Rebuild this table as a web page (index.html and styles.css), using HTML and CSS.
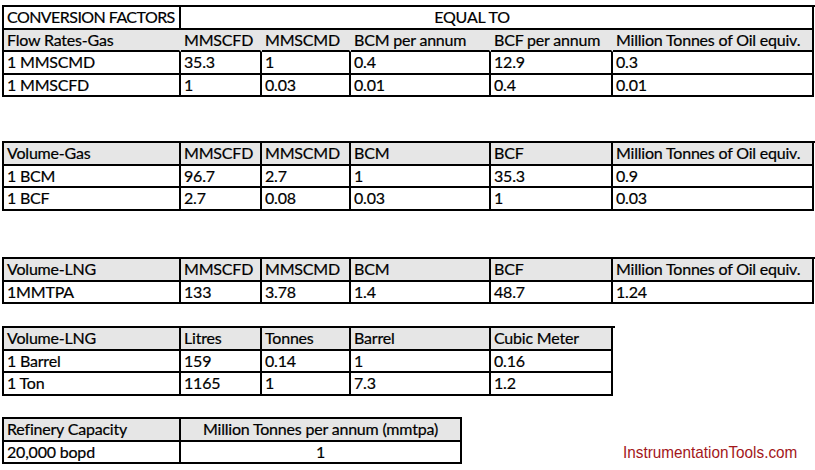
FILE: index.html
```html
<!DOCTYPE html>
<html lang="en">
<head>
<meta charset="utf-8">
<title>Conversion Factors</title>
<link rel="stylesheet" href="styles.css">
</head>
<body>
<div class="sheet">
  <div class="tbl cols6 t1">
    <div class="c caps">CONVERSION FACTORS</div>
    <div class="c span5 equal">EQUAL TO</div>
    <div class="c h open">Flow Rates-Gas</div>
    <div class="c h open">MMSCFD</div>
    <div class="c h open">MMSCMD</div>
    <div class="c h open">BCM per annum</div>
    <div class="c h open">BCF per annum</div>
    <div class="c h">Million Tonnes of Oil equiv.</div>
    <div class="c">1 MMSCMD</div><div class="c">35.3</div><div class="c">1</div><div class="c">0.4</div><div class="c">12.9</div><div class="c">0.3</div>
    <div class="c">1 MMSCFD</div><div class="c">1</div><div class="c">0.03</div><div class="c">0.01</div><div class="c">0.4</div><div class="c">0.01</div>
  </div>

  <div class="tbl cols6 t2">
    <div class="c h">Volume-Gas</div><div class="c h">MMSCFD</div><div class="c h">MMSCMD</div><div class="c h">BCM</div><div class="c h">BCF</div><div class="c h">Million Tonnes of Oil equiv.</div>
    <div class="c">1 BCM</div><div class="c">96.7</div><div class="c">2.7</div><div class="c">1</div><div class="c">35.3</div><div class="c">0.9</div>
    <div class="c">1 BCF</div><div class="c">2.7</div><div class="c">0.08</div><div class="c">0.03</div><div class="c">1</div><div class="c">0.03</div>
  </div>

  <div class="tbl cols6 t3">
    <div class="c h">Volume-LNG</div><div class="c h">MMSCFD</div><div class="c h">MMSCMD</div><div class="c h">BCM</div><div class="c h">BCF</div><div class="c h">Million Tonnes of Oil equiv.</div>
    <div class="c">1MMTPA</div><div class="c">133</div><div class="c">3.78</div><div class="c">1.4</div><div class="c">48.7</div><div class="c">1.24</div>
  </div>

  <div class="tbl cols5 t4">
    <div class="c h">Volume-LNG</div><div class="c h">Litres</div><div class="c h">Tonnes</div><div class="c h">Barrel</div><div class="c h">Cubic Meter</div>
    <div class="c">1 Barrel</div><div class="c">159</div><div class="c">0.14</div><div class="c">1</div><div class="c">0.16</div>
    <div class="c">1 Ton</div><div class="c">1165</div><div class="c">1</div><div class="c">7.3</div><div class="c">1.2</div>
  </div>

  <div class="bottom">
    <div class="tbl cols2 t5">
      <div class="c h">Refinery Capacity</div><div class="c h center">Million Tonnes per annum (mmtpa)</div>
      <div class="c">20,000 bopd</div><div class="c center">1</div>
    </div>
    <div class="mark">InstrumentationTools.com</div>
  </div>
</div>
</body>
</html>
```

FILE: styles.css
```css
html, body {
  margin: 0;
  padding: 0;
  background: #ffffff;
}

.sheet {
  width: 815px;
  height: 470px;
  padding: 5px 0 0 2px;
  box-sizing: border-box;
  font-family: Lato, "Open Sans", sans-serif;
  font-size: 16px;
  letter-spacing: -0.2px;
  color: #000000;
  -webkit-text-stroke: 0.2px #000;
}

.tbl {
  display: grid;
  border-top: 2px solid #000;
  border-left: 2px solid #000;
  grid-auto-rows: 22.5px;
}

.cols6 {
  width: 812px;
  grid-template-columns: 177px 81px 89px 140px 122px 201px;
}

.cols5 {
  width: 611px;
  grid-template-columns: 177px 81px 89px 140px 122px;
}

.cols2 {
  width: 460px;
  grid-template-columns: 177px 281px;
}

.c {
  box-sizing: border-box;
  border-right: 2px solid #000;
  border-bottom: 2px solid #000;
  padding: 0 0 0 3px;
  line-height: 20px;
  white-space: nowrap;
  overflow: hidden;
}

.caps {
  letter-spacing: -0.55px;
}

.h {
  background: #e6e6e6;
}

.open {
  border-right-color: transparent;
}

.span5 {
  grid-column: span 5;
}

.equal {
  text-align: center;
  padding-right: 52px;
}

.center {
  text-align: center;
  padding-left: 0;
}

.t2 { margin-top: 44px; }
.t3 { margin-top: 46.5px; }
.t4 { margin-top: 22px; }

.bottom {
  display: flex;
  align-items: flex-end;
  margin-top: 21.5px;
}

.mark {
  margin-left: 161px;
  margin-bottom: 1px;
  font-family: "Liberation Sans", Arial, sans-serif;
  font-size: 17px;
  letter-spacing: 0;
  -webkit-text-stroke: 0;
  color: #a3171b;
  white-space: nowrap;
  transform: scaleX(0.9);
  transform-origin: left bottom;
}
```
